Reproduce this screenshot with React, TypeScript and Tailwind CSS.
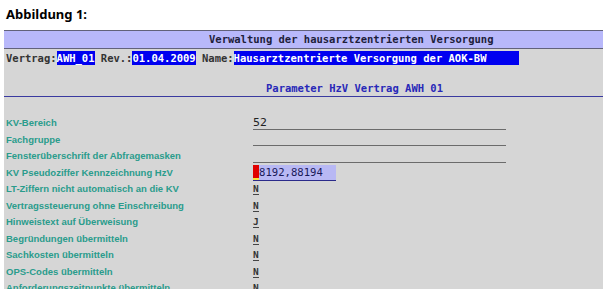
const mono = "font-['DejaVu_Sans_Mono',monospace]";
const label = "font-['Liberation_Sans',Arial,sans-serif]";

const rows: { label: string; value?: string; kind: "line" | "flag" | "cursor" }[] = [
  { label: "KV-Bereich", value: "52", kind: "line" },
  { label: "Fachgruppe", kind: "line" },
  { label: "Fensterüberschrift der Abfragemasken", kind: "line" },
  { label: "KV Pseudoziffer Kennzeichnung HzV", value: "88192,88194", kind: "cursor" },
  { label: "LT-Ziffern nicht automatisch an die KV", value: "N", kind: "flag" },
  { label: "Vertragssteuerung ohne Einschreibung", value: "N", kind: "flag" },
  { label: "Hinweistext auf Überweisung", value: "J", kind: "flag" },
  { label: "Begründungen übermitteln", value: "N", kind: "flag" },
  { label: "Sachkosten übermitteln", value: "N", kind: "flag" },
  { label: "OPS-Codes übermitteln", value: "N", kind: "flag" },
  { label: "Anforderungszeitpunkte übermitteln", value: "N", kind: "flag" },
];

const Value = ({ row }: { row: (typeof rows)[number] }) => {
  if (row.kind === "line") {
    return (
      <div className="w-[253px] h-[13px] border-b border-[#6b6b6b] text-[11px] leading-[12px] text-[#222] font-['DejaVu_Sans',sans-serif]">
        {row.value}
      </div>
    );
  }
  if (row.kind === "cursor") {
    return (
      <div className={`flex h-[16px] w-[83px] bg-[#b8b8f4] border-b border-[#2a2a8a] ${mono} text-[10.6px] leading-[15px] text-[#1a1a5a]`}>
        <span className="relative w-[6px] bg-[#e00000] text-[#e00000] overflow-hidden">
          8
          <span className="absolute left-0 bottom-[-1px] w-[6px] h-[3px] bg-[#f5e23a]" />
        </span>
        <span>8192,88194</span>
      </div>
    );
  }
  return (
    <span className={`${mono} font-bold text-[9.5px] leading-[11px] text-[#333] border-b border-[#444]`}>
      {row.value}
    </span>
  );
};

export default function App() {
  return (
    <div className="w-[611px] h-[298px] bg-white overflow-hidden">
      <div className="pl-[6px] pt-[4px] h-[30px] text-[13px] font-bold text-black font-['Noto_Sans',sans-serif] leading-[20px]">
        Abbildung 1:
      </div>
      <div className="ml-[4px] w-[599px] h-[259px] bg-[#d6d6d6] overflow-hidden">
        <div className={`h-[19px] bg-[#b8b8fa] border-y border-[#62627a] pl-[205px] ${mono} font-bold text-[10.5px] leading-[17px] text-[#1e1e3c]`}>
          Verwaltung der hausarztzentrierten Versorgung
        </div>
        <div className={`flex items-center h-[17px] pl-[2px] ${mono} font-bold text-[10.5px] leading-[14px] text-[#333]`}>
          <span>Vertrag:</span>
          <span className="bg-[#0000f0] text-white">AWH_01</span>
          <span>&nbsp;Rev.:</span>
          <span className="bg-[#0000f0] text-white">01.04.2009</span>
          <span>&nbsp;Name:</span>
          <span className="bg-[#0000f0] text-white w-[285px]">Hausarztzentrierte Versorgung der AOK-BW</span>
        </div>
        <div className={`mt-[16px] h-[15px] border-b border-[#3a3aa0] pl-[262px] ${mono} font-bold text-[10.5px] leading-[12px] text-[#2828b8]`}>
          Parameter HzV Vertrag AWH 01
        </div>
        <div className="pt-[18px] flex flex-col">
          {rows.map((row) => (
            <div key={row.label} className="flex items-center h-[16.5px]">
              <div className={`w-[249px] pl-[2px] ${label} font-bold text-[9.5px] text-[#2a9c8c] whitespace-nowrap`}>
                {row.label}
              </div>
              <Value row={row} />
            </div>
          ))}
        </div>
      </div>
    </div>
  );
}
